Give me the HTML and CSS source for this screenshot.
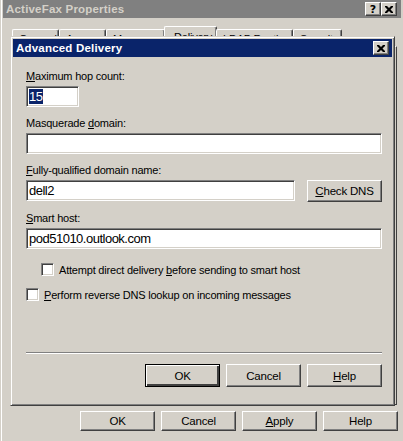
FILE: index.html
```html
<!DOCTYPE html>
<html lang="en">

<head>
    <meta charset="UTF-8">
    <title>ActiveFax Properties</title>
    <link rel="stylesheet" href="styles.css">
</head>

<body>
    <div class="window">
        <div class="titlebar inactive">
            <span class="title">ActiveFax Properties</span>
            <div class="title-buttons">
                <button class="cap-btn help-cap">?</button>
                <button class="cap-btn">
                    <svg width="8" height="7" viewBox="0 0 8 7"><path d="M0 0h2l2 2 2-2h2v1l-2.5 2.5L8 6v1H6L4 5 2 7H0V6l2.5-2.5L0 1z" fill="#000"/></svg>
                </button>
            </div>
        </div>

        <div class="tabs">
            <div class="tab t1">General</div>
            <div class="tab t2">Access</div>
            <div class="tab t3">Messages</div>
            <div class="tab selected t4">Delivery</div>
            <div class="tab t5">LDAP Routing</div>
            <div class="tab t6">Security</div>
        </div>
        <div class="tab-pane"></div>

        <div class="bottom-buttons">
            <button class="btn">OK</button>
            <button class="btn">Cancel</button>
            <button class="btn"><u>A</u>pply</button>
            <button class="btn">Help</button>
        </div>

        <!-- modal dialog sitting over the property sheet -->
        <div class="dialog">
            <div class="titlebar active">
                <span class="title">Advanced Delivery</span>
                <button class="cap-btn">
                    <svg width="8" height="7" viewBox="0 0 8 7"><path d="M0 0h2l2 2 2-2h2v1l-2.5 2.5L8 6v1H6L4 5 2 7H0V6l2.5-2.5L0 1z" fill="#000"/></svg>
                </button>
            </div>
            <div class="dialog-body">
                <label class="field-label"><u>M</u>aximum hop count:</label>
                <div class="input short"><span class="selected-text">15</span></div>

                <label class="field-label">Masquerade <u>d</u>omain:</label>
                <div class="input"></div>

                <label class="field-label"><u>F</u>ully-qualified domain name:</label>
                <div class="row">
                    <div class="input fqdn">dell2</div>
                    <button class="btn check-dns"><u>C</u>heck DNS</button>
                </div>

                <label class="field-label"><u>S</u>mart host:</label>
                <div class="input">pod51010.outlook.com</div>

                <div class="check indent">
                    <span class="box"></span>
                    <span>Attempt direct delivery <u>b</u>efore sending to smart host</span>
                </div>
                <div class="check">
                    <span class="box"></span>
                    <span><u>P</u>erform reverse DNS lookup on incoming messages</span>
                </div>

                <div class="separator"></div>

                <div class="dialog-buttons">
                    <button class="btn default">OK</button>
                    <button class="btn">Cancel</button>
                    <button class="btn"><u>H</u>elp</button>
                </div>
            </div>
        </div>
    </div>
</body>

</html>
```

FILE: styles.css
```css
html,
body {
    margin: 0;
    padding: 0;
    width: 403px;
    height: 441px;
    overflow: hidden;
    background: #d4d0c8;
    font-family: "Liberation Sans", Arial, sans-serif;
    font-size: 11px;
    letter-spacing: -0.2px;
    color: #000;
}

u {
    text-decoration: underline;
    text-underline-offset: 1px;
}

.window {
    position: relative;
    height: 441px;
    box-sizing: border-box;
    border-left: 1px solid #d4d0c8;
    box-shadow: inset 1px 0 #fff;
    padding: 0 2px 0 2px;
    display: flex;
    flex-direction: column;
}

.titlebar {
    height: 18px;
    display: flex;
    align-items: center;
    justify-content: space-between;
    padding: 0 4px 0 3px;
}

.titlebar.inactive {
    background: #808080;
    color: #d4d0c8;
}

.titlebar.active {
    background: #0a246a;
    color: #fff;
}

.title {
    font-weight: bold;
    font-size: 11.5px;
    letter-spacing: 0.2px;
}

.title-buttons {
    display: flex;
}

.cap-btn {
    width: 16px;
    height: 14px;
    padding: 0;
    margin: 0;
    background: #d4d0c8;
    border: 1px solid;
    border-color: #fff #404040 #404040 #fff;
    box-shadow: inset -1px -1px #808080;
    display: flex;
    align-items: center;
    justify-content: center;
    font-family: "DejaVu Sans", sans-serif;
    font-weight: bold;
    font-size: 11px;
    line-height: 1;
}

.tabs {
    display: flex;
    align-items: flex-end;
    height: 20px;
    margin-top: 8px;
    padding-left: 9px;
}

.tab {
    height: 17px;
    box-sizing: border-box;
    border: 1px solid;
    border-color: #fff #404040 transparent #fff;
    border-bottom: none;
    box-shadow: inset -1px 0 #808080;
    border-radius: 2px 2px 0 0;
    padding: 3px 0 0 6px;
    white-space: nowrap;
    overflow: hidden;
}

.tab.selected {
    height: 20px;
    margin: 0 -1px;
    padding-top: 4px;
    padding-left: 9px;
}

.t1 { width: 47px; }
.t2 { width: 47px; }
.t3 { width: 59px; }
.t4 { width: 53px; }
.t5 { width: 77px; }
.t6 { width: 49px; }

.tab-pane {
    flex: 1;
    margin: 0 4px 0 9px;
    border: 1px solid;
    border-color: #fff #404040 #404040 #fff;
}

.bottom-buttons {
    display: flex;
    justify-content: flex-end;
    gap: 6px;
    padding: 6px 3px 10px 0;
}

.btn {
    width: 75px;
    height: 23px;
    padding: 0;
    margin: 0;
    background: #d4d0c8;
    border: 1px solid;
    border-color: #fff #404040 #404040 #fff;
    box-shadow: inset -1px -1px #808080;
    font-family: inherit;
    font-size: 11.5px;
    letter-spacing: -0.2px;
    color: #000;
}

.btn.default {
    border-color: #000;
    box-shadow: inset 1px 1px #fff, inset -2px -2px #404040, inset -1px -1px #808080;
}

.bottom-buttons .btn {
    height: 20px;
}

.dialog {
    position: absolute;
    left: 9px;
    top: 36px;
    width: 385px;
    height: 370px;
    box-sizing: border-box;
    background: #d4d0c8;
    border: 1px solid;
    border-color: #d4d0c8 #404040 #404040 #d4d0c8;
    box-shadow: inset 1px 1px #fff, inset -1px -1px #808080;
    padding: 2px;
    display: flex;
    flex-direction: column;
}

.dialog .titlebar {
    padding: 0 3px 0 3px;
}

.dialog-body {
    flex: 1;
    display: flex;
    flex-direction: column;
    padding: 13px 10px 16px 13px;
}

.field-label {
    display: block;
    line-height: 13px;
    margin-bottom: 3px;
}

.input {
    height: 21px;
    box-sizing: border-box;
    background: #fff;
    border: 1px solid;
    border-color: #808080 #fff #fff #808080;
    box-shadow: inset 1px 1px #404040, inset -1px -1px #d4d0c8;
    padding: 2px 2px 0 2px;
    font-size: 13px;
    letter-spacing: -0.5px;
    line-height: 15px;
    margin-bottom: 10px;
}

.input.short {
    width: 53px;
}

.selected-text {
    background: #0a246a;
    color: #fff;
    padding-right: 1px;
}

.row {
    display: flex;
    gap: 12px;
    margin-bottom: 10px;
}

.row .input {
    margin-bottom: 0;
}

.fqdn {
    flex: 1;
}

.check-dns {
    width: 75px;
    height: 22px;
}

.check {
    display: flex;
    align-items: center;
    gap: 5px;
    height: 13px;
    margin-bottom: 12px;
}

.check.indent {
    margin-left: 15px;
    margin-top: 4px;
}

.box {
    width: 13px;
    height: 13px;
    box-sizing: border-box;
    background: #fff;
    border: 1px solid;
    border-color: #808080 #fff #fff #808080;
    box-shadow: inset 1px 1px #404040, inset -1px -1px #d4d0c8;
}

.separator {
    margin-top: auto;
    height: 0;
    border-top: 1px solid #808080;
    border-bottom: 1px solid #fff;
}

.dialog-buttons {
    display: flex;
    justify-content: flex-end;
    gap: 6px;
    margin-top: 10px;
}
```
